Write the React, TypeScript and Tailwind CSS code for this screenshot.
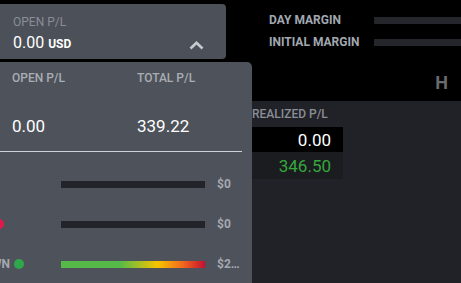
export default function App() {
  const rows = [
    { label: 'DAILY LOSS LIMIT', dot: '', pad: 'pr-[61px]', value: '$0', bar: 'bg-[#232429]' },
    { label: 'WEEKLY LOSS', dot: 'bg-[#e3194b]', pad: 'pr-[57px]', value: '$0', bar: 'bg-[#232429]' },
    {
      label: 'TRAILING DRAWDOWN',
      dot: 'bg-[#2ea84a]',
      pad: 'pr-[37px]',
      value: '$2,500.00',
      bar: 'bg-[linear-gradient(to_right,#56ba48_0%,#56ba48_41%,#f6c500_67%,#f26b1d_84%,#c60f30_100%)]',
    },
  ];

  return (
    <div className="relative w-[461px] h-[283px] overflow-hidden bg-black font-['Roboto',sans-serif] flex flex-col">
      {/* Top bar */}
      <div className="flex pt-[4px] mb-[3px]">
        <div className="w-[226px] h-[55px] shrink-0 bg-[#4c5058] rounded-r-[4px] pl-[13px] pr-[22px] flex justify-between">
          <div className="pt-[11px]">
            <div className="text-[12px] leading-[14px] text-[#8a8e96]">OPEN P/L</div>
            <div className="mt-[4px] flex items-baseline gap-[4px] text-white">
              <span className="text-[16px] leading-[19px]">0.00</span>
              <span className="text-[12px] font-bold">USD</span>
            </div>
          </div>
          <div className="flex items-end pb-[9px]">
            <svg width="15" height="9" viewBox="0 0 15 9" fill="none">
              <polyline points="1.5,7.5 7.5,1.8 13.5,7.5" stroke="#c7cace" strokeWidth="2.6" />
            </svg>
          </div>
        </div>
        <div className="flex-1 ml-[43px] pt-[10px] flex flex-col gap-[9px]">
          <div className="flex items-center">
            <span className="w-[105px] shrink-0 text-[12px] leading-[13px] font-bold text-[#a2a8b1]">DAY MARGIN</span>
            <div className="flex-1 h-[7px] bg-[#25262b]" />
          </div>
          <div className="flex items-center">
            <span className="w-[105px] shrink-0 text-[12px] leading-[13px] font-bold text-[#a2a8b1]">INITIAL MARGIN</span>
            <div className="flex-1 h-[7px] bg-[#25262b]" />
          </div>
        </div>
      </div>

      {/* Module header */}
      <div className="h-[39px] flex justify-end pt-[10px] pr-[13px]">
        <span className="text-[18px] leading-[21px] font-bold text-[#6a6b6e]">H</span>
      </div>

      {/* Table */}
      <div className="flex-1 bg-[#212227] flex">
        <div className="w-[252px] shrink-0" />
        <div className="w-[91px] pt-[6px]">
          <div className="text-[12px] leading-[14px] font-medium text-[#8a8e96] whitespace-nowrap">REALIZED P/L</div>
          <div className="mt-[6px] h-[25px] bg-black pt-[2px] pr-[12px] text-right text-[17px] leading-[23px] text-white">0.00</div>
          <div className="h-[27px] bg-[#1b1c20] pt-[2px] pr-[12px] text-right text-[17px] leading-[25px] text-[#35a83c]">346.50</div>
        </div>
      </div>

      {/* Dropdown panel */}
      <div className="absolute left-0 top-[62px] bottom-0 w-[252px] bg-[#4e525a] rounded-tr-[5px]">
        <div className="flex pl-[12px] pt-[9px]">
          <div className="w-[125px]">
            <div className="text-[12px] leading-[14px] font-medium text-[#a9adb4]">OPEN P/L</div>
            <div className="mt-[31px] text-[17px] leading-[20px] text-white">0.00</div>
          </div>
          <div>
            <div className="text-[12px] leading-[14px] font-medium text-[#a9adb4]">TOTAL P/L</div>
            <div className="mt-[31px] text-[17px] leading-[20px] text-white">339.22</div>
          </div>
        </div>
        <div className="mt-[15px] mr-[10px] h-px bg-[#cdd0d4]" />
        <div className="pt-[12px]">
          {rows.map((r) => (
            <div key={r.label} className="h-[40px] flex items-center">
              <div className={`w-[61px] shrink-0 flex justify-end items-center gap-[4px] whitespace-nowrap ${r.pad}`}>
                <span className="shrink-0 text-[12px] font-bold text-[#a4a8b0]">{r.label}</span>
                {r.dot && <span className={`shrink-0 w-[10px] h-[10px] rounded-full ${r.dot}`} />}
              </div>
              <div className={`w-[144px] h-[7px] ${r.bar}`} />
              <div className="ml-[12px] w-[25px] truncate text-[12px] font-bold text-[#a4a8b0]">{r.value}</div>
            </div>
          ))}
        </div>
      </div>
    </div>
  );
}
